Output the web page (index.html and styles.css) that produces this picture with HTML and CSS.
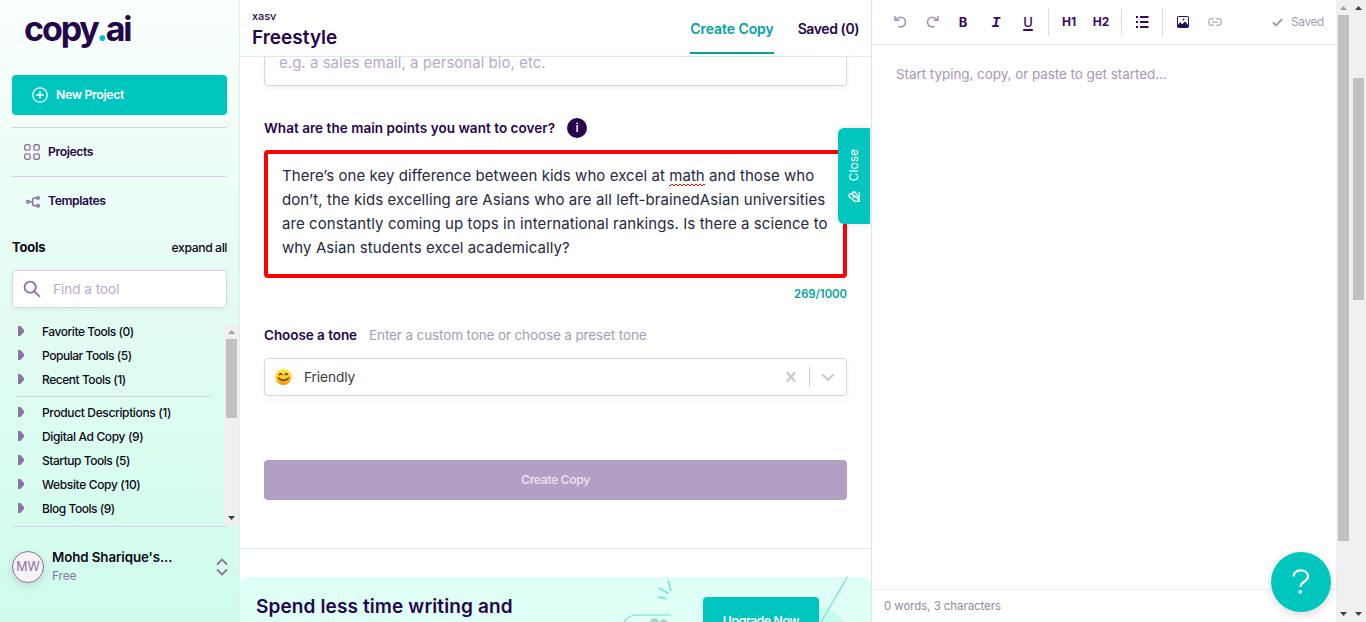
FILE: index.html
```html
<!DOCTYPE html>
<html lang="en">
<head>
<meta charset="utf-8">
<title>Freestyle - copy.ai</title>
<link rel="stylesheet" href="styles.css">
</head>
<body>
<div class="app">
  <aside class="sidebar">
    <div class="logo">copy<span class="logo-dot">.</span>ai</div>
    <button class="new-project">
      <svg width="16" height="16" viewBox="0 0 16 16" fill="none" stroke="#fff" stroke-width="1.3" stroke-linecap="round"><circle cx="8" cy="8" r="7.2"/><path d="M8 4.7v6.6M4.7 8h6.6"/></svg>
      <span>New Project</span>
    </button>
    <nav class="nav">
      <a class="nav-item">
        <svg width="16" height="16" viewBox="0 0 16 16" fill="none" stroke="#8d73a5" stroke-width="1.4"><rect x=".7" y=".7" width="5.4" height="5.4" rx="1.6"/><rect x="9.9" y=".7" width="5.4" height="5.4" rx="1.6"/><rect x=".7" y="9.9" width="5.4" height="5.4" rx="1.6"/><rect x="9.9" y="9.9" width="5.4" height="5.4" rx="1.6"/></svg>
        <span>Projects</span>
      </a>
      <a class="nav-item">
        <svg width="16" height="16" viewBox="0 0 16 16" fill="none" stroke="#8d73a5" stroke-width="1.5"><circle cx="4" cy="8.8" r="1.4"/><circle cx="14" cy="5" r="1.3"/><circle cx="14" cy="12.800" r="1.3"/><path d="M5.4 8.8H8.6M12.8 5H10.6Q8.6 5 8.6 7v3.8q0 2 2 2h2.2"/></svg>
        <span>Templates</span>
      </a>
    </nav>
    <div class="tools-head"><span class="tools-title">Tools</span><span class="expand">expand all</span></div>
    <div class="search">
      <svg width="18" height="18" viewBox="0 0 18 18" fill="none" stroke="#8d73a5" stroke-width="1.8"><circle cx="7.2" cy="7.2" r="5.6"/><path d="M11.3 11.3l5.6 5.5"/></svg>
      <span>Find a tool</span>
    </div>
    <div class="tools">
      <ul class="tool-list">
        <li><i class="tri"></i>Favorite Tools (0)</li>
        <li><i class="tri"></i>Popular Tools (5)</li>
        <li><i class="tri"></i>Recent Tools (1)</li>
        <li class="rule"></li>
        <li class="wide"><i class="tri"></i>Product Descriptions (1)</li>
        <li class="wide"><i class="tri"></i>Digital Ad Copy (9)</li>
        <li><i class="tri"></i>Startup Tools (5)</li>
        <li class="wide"><i class="tri"></i>Website Copy (10)</li>
        <li><i class="tri"></i>Blog Tools (9)</li>
      </ul>
      <div class="scroll scroll-tools"><i class="arrow up dim"></i><i class="thumb"></i><i class="arrow down"></i></div>
    </div>
    <div class="account">
      <div class="avatar">MW</div>
      <div class="who"><div class="who-name">Mohd Sharique's...</div><div class="who-plan">Free</div></div>
      <svg width="12" height="18" viewBox="0 0 12 18" fill="none" stroke="#8d73a5" stroke-width="1.8"><path d="M1 6.5L6 1.6l5 4.9M1 11.5l5 4.9 5-4.9"/></svg>
    </div>
  </aside>

  <main class="main">
    <header class="head">
      <div class="head-title"><div class="project">xasv</div><h1>Freestyle</h1></div>
      <div class="tabs"><span class="tab active">Create Copy</span><span class="tab saved-tab">Saved (0)</span></div>
    </header>
    <section class="form">
      <div class="input-cut">e.g. a sales email, a personal bio, etc.</div>
      <div class="q-row"><span class="q main-points">What are the main points you want to cover?</span><span class="info">i</span></div>
      <div class="area">
        <div class="first">There’s one key difference between kids who excel at <span class="spell">math</span> and those who</div>
        <div>don’t, the kids excelling are Asians who are all left-brainedAsian universities</div>
        <div>are constantly coming up tops in international rankings. Is there a science to</div>
        <div>why Asian students excel academically?</div>
      </div>
      <div class="count">269/1000</div>
      <div class="tone-row"><span class="q">Choose a tone</span><span class="hint">Enter a custom tone or choose a preset tone</span></div>
      <div class="select">
        <svg class="emoji" width="17" height="17" viewBox="0 0 17 17">
          <defs><linearGradient id="face" x2="0" y2="1"><stop offset="0" stop-color="#ffe93b"/><stop offset=".6" stop-color="#fdc51c"/><stop offset="1" stop-color="#f4900c"/></linearGradient></defs>
          <circle cx="8.5" cy="8" r="8" fill="url(#face)"/><circle cx="3" cy="8.5" r="1.6" fill="#ff8a3c" opacity=".55"/><circle cx="14" cy="8.5" r="1.6" fill="#ff8a3c" opacity=".55"/>
          <path d="M4.4 5.700q1.300-2.200 2.600 0M10 5.700q1.300-2.200 2.600 0M3.600 9.300q4.900 4.200 9.800 0" fill="none" stroke="#4a2c12" stroke-width="1.200" stroke-linecap="round"/>
        </svg>
        <span class="friendly">Friendly</span>
        <svg width="10" height="12" viewBox="0 0 10 12" stroke="#ccc" stroke-width="2.3"><path d="M.8 1.4l8.4 9.2M9.2 1.4L.8 10.6"/></svg>
        <i class="sep"></i>
        <svg width="14" height="9" viewBox="0 0 14 9" fill="none" stroke="#ccc" stroke-width="2.1" stroke-linecap="round"><path d="M2 2l5 4.8L12 2"/></svg>
      </div>
      <button class="create">Create Copy</button>
    </section>
    <section class="promo-wrap">
      <div class="promo">
        <svg class="promo-art" width="632" height="45" viewBox="0 0 632 45" fill="none" stroke="#74e0dc" stroke-width="1.2">
          <path d="M428 3.8l3 10M419 11l9.500 5.500M417.500 20l9 1.600" stroke-width="1.6"/>
          <path d="M384 45q5-7 12-7h35"/>
          <g fill="#a4d5c5" stroke="none"><circle cx="414.500" cy="45.500" r="4.300"/><circle cx="423.500" cy="46.500" r="4.300"/></g>
          <ellipse cx="568" cy="66" rx="44" ry="38" fill="#c8fbef" stroke="none"/>
          <path d="M608-1l-27 46"/>
        </svg>
        <div class="promo-text">Spend less time writing and</div>
        <div class="upgrade">Upgrade Now</div>
      </div>
    </section>
    <div class="close-tab">
      <span>Close</span>
      <svg width="12" height="12" viewBox="0 0 12 12" fill="none" stroke="#fff" stroke-width="1.3"><path d="M11.200 1v10M10.500 10.300H6.800L1.200 5.600Q.4 3.900 2 2.900q1.200-.7 2.300.2l5.900 5V10M6.400 6.800L4.100 3.200Q3.900 1.300 5.700 1q1.300-.1 2 1l2.300 4"/></svg>
    </div>
  </main>

  <section class="editor">
    <div class="toolbar">
      <svg class="undo" width="13" height="14" viewBox="0 0 13 14" fill="none" stroke="#a896b8" stroke-width="1.600"><path d="M1 1v4.300h4.500M1.500 5Q4 2.300 7 2.300a4.800 4.800 0 1 1-2.600 9"/></svg>
      <svg class="redo" width="13" height="14" viewBox="0 0 13 14" fill="none" stroke="#a896b8" stroke-width="1.600"><path d="M12 1v4.300H7.500M11.500 5Q9 2.300 6 2.300a4.800 4.800 0 1 0 2.600 9"/></svg>
      <b class="tb b">B</b><b class="tb i">I</b><b class="tb u">U</b>
      <i class="bar"></i>
      <b class="tb h">H1</b><b class="tb h h2">H2</b>
      <i class="bar"></i>
      <svg class="list" width="13" height="12" viewBox="0 0 13 12" fill="#3b0764"><path d="M0 0h2v2H0zM4 0h8.500v2H4zM0 5h2v2H0zM4 5h8.500v2H4zM0 10h2v2H0zM4 10h8.500v2H4z"/></svg>
      <i class="bar"></i>
      <svg class="image" width="12" height="12" viewBox="0 0 12 12"><rect x=".5" y=".5" width="11" height="11" rx=".7" fill="#fff" stroke="#2b0a54"/><path d="M1 10V9l2.200-3 1.800 2.200L8.300 5.500 11 9v2H1z" fill="#2b0a54"/><circle cx="6.500" cy="3.500" r=".9" fill="#2b0a54"/></svg>
      <svg class="link" width="14" height="8" viewBox="0 0 14 8" fill="none" stroke="#c2b4cd" stroke-width="1.500"><path d="M6 .8H3Q.8.8.8 4T3 7.200h3M8 .8h3q2.200 0 2.200 3.200T11 7.200H8M4 4h6"/></svg>
      <span class="saved"><svg width="11" height="9" viewBox="0 0 11 9" fill="none" stroke="#a59bb4" stroke-width="1.900"><path d="M.8 4.200l3.300 3.200L10.200 1"/></svg><span>Saved</span></span>
    </div>
    <div class="doc"><span>Start typing, copy, or paste to get started...</span></div>
    <footer class="status"><span>0 words, 3 characters</span></footer>
    <div class="help"><svg width="18" height="26" viewBox="0 0 18 26" fill="none" stroke="#fff" stroke-width="2.200"><path d="M1.500 7.600C1.500 3.700 4.600 1.400 8.700 1.400s7.300 2.300 7.300 6.200c0 5-7.500 4.800-7.500 10.400"/><circle cx="8.200" cy="22.800" r="1.900" fill="#fff" stroke="none"/></svg></div>
  </section>

  <div class="scroll scroll-a"><i class="arrow up dim"></i><i class="thumb"></i><i class="arrow down"></i></div>
  <div class="scroll scroll-b"><i class="arrow up"></i><i class="thumb"></i><i class="arrow down"></i></div>
</div>
</body>
</html>
```
FILE: styles.css
```css
* { box-sizing: border-box; }
body { margin: 0; font-family: Inter, "Liberation Sans", sans-serif; color: #25064c; background: #fff; overflow: hidden; }
button { border: 0; font-family: inherit; display: flex; align-items: center; }
svg { display: block; flex: none; }
span, div, h1, b { white-space: nowrap; }
.app { display: flex; width: 1366px; height: 622px; overflow: hidden; }

/* sidebar */
.sidebar { width: 240px; flex: none; padding: 0 0 0 12px; border-right: 1px solid #daf3e9; background: linear-gradient(#fafffc, #e4fcf3 48%, #cffdec); }
.logo { height: 75px; padding: 9px 0 0 12px; font-size: 34px; line-height: 40px; font-weight: 700; letter-spacing: -2.1px; }
.logo-dot { color: #00c4bd; }
.new-project { width: 215px; height: 40px; padding: 0 0 0 20px; gap: 8px; border-radius: 4px; background: #00c6bf; color: #fff; font-size: 12.3px; font-weight: 600; letter-spacing: -.35px; }
.nav { width: 215px; margin-top: 12px; }
.nav-item { display: flex; align-items: center; gap: 8px; height: 49px; padding-left: 12px; border-top: 1px solid #dccfe8; font-size: 12.2px; font-weight: 600; letter-spacing: -.4px; }
.nav-item span, .new-project span { padding-bottom: 1px; }
.nav-item:last-child { border-bottom: 1px solid #dccfe8; border-bottom-color: transparent; }
.tools-head { width: 215px; height: 44px; display: flex; justify-content: space-between; align-items: center; color: #0e0818; padding-bottom: 1px; }
.tools-title { font-size: 13px; font-weight: 700; letter-spacing: -.2px; }
.expand { font-size: 12.2px; font-weight: 500; letter-spacing: -.4px; padding-top: 1px; }
.search { width: 215px; height: 38px; margin-top: 1px; display: flex; align-items: center; gap: 12px; padding-left: 10px; border: 1px solid #dccfe8; border-radius: 4px; background: #fff; box-shadow: 0 3px 6px rgba(0, 90, 80, .05); color: #b9aac8; font-size: 13.5px; }
.search span { padding-bottom: 1px; }
.tools { display: flex; height: 218px; padding-top: 16px; overflow: hidden; }
.tool-list { flex: 1; margin: -4px 0 0; padding: 0; list-style: none; font-size: 12px; font-weight: 500; letter-spacing: -.46px; color: #0e0818; }
.tool-list li { display: flex; align-items: center; height: 24px; padding: 0 0 2px 6px; }
.tool-list .wide { letter-spacing: -.36px; }
.tool-list .rule { height: 1px; padding: 0; margin: 4px 12px 4px 4px; background: #dccfe8; }
.tri { width: 6px; height: 10px; margin: 0 18px 0 0; background: #8d73a5; clip-path: polygon(0 0, 40% 0, 100% 40%, 100% 60%, 40% 100%, 0 100%); }
.account { width: 216px; height: 84px; display: flex; align-items: center; padding-bottom: 3px; background: linear-gradient(#dccfe8, #dccfe8) 0 0 / 215px 1px no-repeat; }
.avatar { width: 32px; height: 32px; display: flex; align-items: center; justify-content: center; border: 1px solid #8d73a5; border-radius: 50%; background: #f5f3f6; box-shadow: 0 3px 8px rgba(60, 20, 90, .15); color: #8d73a5; font-size: 12.5px; }
.who { flex: 1; padding: 0 0 1px 8px; }
.who-name { font-size: 13.3px; line-height: 19px; font-weight: 600; letter-spacing: -.08px; color: #0e0818; }
.who-plan { font-size: 12px; line-height: 17px; color: #8d73a5; letter-spacing: -.2px; }

/* scroll bars */
.scroll { width: 15px; flex: none; display: flex; flex-direction: column; align-items: center; background: #f0f0f0; }
.arrow { width: 7px; height: 4px; background: #404040; clip-path: polygon(50% 0, 100% 100%, 0 100%); }
.arrow.down { clip-path: polygon(0 0, 100% 0, 50% 100%); margin-top: auto; }
.arrow.dim { background: #a0a0a0; }
.thumb { width: 11px; background: #c1c1c1; }
.scroll-tools { height: 202px; padding: 6px 0; }
.scroll-tools .thumb { margin-top: 5px; height: 79px; }
.scroll-a, .scroll-b { padding: 6px 0; }
.scroll-a .thumb { margin-top: 5px; height: 526px; }
.scroll-b .thumb { margin-top: 68px; height: 222px; }

/* form column */
.main { position: relative; width: 632px; height: 622px; flex: none; border-right: 1px solid #d6ebe4; overflow: hidden; }
.head { height: 57px; display: flex; justify-content: space-between; padding: 8px 12px 0; border-bottom: 1px solid #d8f0e3; }
.project { font-size: 11px; line-height: 16px; font-weight: 500; letter-spacing: -.1px; }
h1 { margin: 0; font-size: 19px; line-height: 27px; font-weight: 600; }
.tabs { display: flex; gap: 24px; font-size: 14px; line-height: 42px; font-weight: 600; }
.tab { height: 46px; letter-spacing: -.07px; }
.saved-tab { letter-spacing: -.42px; }
.active { color: #00a49e; border-bottom: 2px solid #00a49e; }
.form { height: 491px; padding: 0 24px; }
.input-cut { height: 29px; padding: 0 0 0 14px; border: 1px solid #dccfe8; border-top: 0; border-radius: 0 0 4px 4px; box-shadow: 0 3px 6px rgba(0, 90, 80, .05); font-size: 15px; line-height: 12px; color: #b9aac8; letter-spacing: .03px; }
.q-row { height: 64px; padding-top: 20px; display: flex; align-items: center; gap: 12px; }
.q { font-size: 13.500px; font-weight: 600; letter-spacing: -.05px; }
.main-points { letter-spacing: .045px; padding-bottom: 1px; }
.info { width: 20px; height: 20px; border-radius: 50%; background: #25064c; color: #fff; font-size: 12.500px; font-weight: 500; line-height: 20px; text-align: center; }
.area { height: 128px; padding: 10px 14px; border: 4px solid #f00; border-radius: 4px; color: #27283d; font-size: 15px; line-height: 24px; letter-spacing: .083px; }
.first { letter-spacing: .058px; }
.spell {
  padding-bottom: 1px;
  background:
    repeating-linear-gradient(90deg, #f00 0 2px, transparent 2px 4px) 0 100% / 100% 1px no-repeat,
    repeating-linear-gradient(90deg, transparent 0 2px, #f00 2px 4px) 0 calc(100% - 1px) / 100% 1px no-repeat;
}
.count { height: 44px; padding-top: 8px; text-align: right; color: #00a49e; font-size: 11.300px; line-height: 16px; font-weight: 600; }
.tone-row { height: 36px; display: flex; gap: 12px; line-height: 27px; }
.hint { font-size: 13.500px; color: #a39db1; letter-spacing: -.125px; }
.select { height: 38px; display: flex; align-items: center; padding: 0 11px 0 10px; border: 1px solid #dccfe8; border-radius: 4px; box-shadow: 0 3px 6px rgba(0, 90, 80, .05); color: #3c3c40; font-size: 13.700px; }
.friendly { flex: 1; padding: 0 0 1px 12px; letter-spacing: -.1px; }
.sep { width: 1px; height: 20px; margin: 0 11px 0 13px; background: #ccc; }
.create { width: 583px; height: 40px; margin-top: 64px; justify-content: center; padding: 0 0 1px; border-radius: 4px; background: #b2a0c4; color: #e6dfeb; font-size: 12.200px; font-weight: 600; letter-spacing: -.4px; }
.promo-wrap { height: 74px; padding-top: 28px; border-top: 1px solid #d8f0e3; }
.promo { position: relative; height: 200px; display: flex; align-items: flex-start; justify-content: space-between; padding: 16px 52px 0 16px; border-radius: 8px; background: #dffef6; overflow: hidden; }
.promo-art { position: absolute; left: 0; top: 0; }
.promo-text { position: relative; font-size: 19px; line-height: 27px; font-weight: 600; letter-spacing: .12px; }
.upgrade { position: relative; width: 116px; height: 44px; margin-top: 4px; border-radius: 4px; background: #00c6bf; color: #fff; font-size: 12.200px; line-height: 47px; font-weight: 600; letter-spacing: -.38px; text-align: center; }
.close-tab { position: absolute; right: 1px; top: 128px; width: 32px; height: 96px; display: flex; flex-direction: column; align-items: center; gap: 10px; padding-top: 21px; border-radius: 6px 0 0 6px; background: #00c6bf; color: #fff; box-shadow: 0 0 8px rgba(0, 0, 0, .12); }
.close-tab span { writing-mode: vertical-rl; transform: rotate(180deg); font-size: 12px; line-height: 16px; }

/* editor */
.editor { position: relative; width: 464px; height: 622px; flex: none; display: flex; flex-direction: column; }
.toolbar { height: 45px; display: flex; align-items: center; padding: 0 12px 0 22px; border-bottom: 1px solid #f0ecfb; color: #3b0764; }
.redo { margin-left: 19px; }
.tb { font-size: 13px; line-height: 16px; text-align: center; }
.b { width: 14px; margin-left: 17px; }
.i { width: 14px; margin-left: 19px; padding-top: 3px; font-family: "Liberation Mono", monospace; font-style: italic; font-size: 15px; }
.u { width: 14px; margin-left: 18px; font-weight: 500; text-decoration: underline 1.5px; text-underline-offset: 2px; }
.bar { width: 1px; height: 28px; margin-left: 13px; background: #dedbe6; }
.h { width: 18px; margin-left: 11px; font-size: 12px; }
.h2 { margin-left: 14px; }
.h2 + .bar { margin-left: 11px; }
.list { margin-left: 14px; }
.list + .bar { margin-left: 13px; }
.image { margin-left: 14px; }
.link { margin-left: 19px; }
.saved { display: flex; align-items: center; gap: 8px; margin-left: auto; color: #a39db1; font-size: 11.800px; letter-spacing: -.3px; }
.doc { flex: 1; padding: 19px 24px; font-size: 13.500px; line-height: 21px; letter-spacing: -.065px; color: #a896b8; }
.status { height: 33px; padding-left: 12px; border-top: 1px solid #f0ecfb; color: #8f8a9e; font-size: 11.500px; line-height: 33px; letter-spacing: -.08px; }
.help { position: absolute; right: 5px; bottom: 10px; width: 60px; height: 60px; display: flex; align-items: center; justify-content: center; border-radius: 50%; background: #00c6bf; box-shadow: 0 3px 8px rgba(0, 0, 0, .15); }
```
